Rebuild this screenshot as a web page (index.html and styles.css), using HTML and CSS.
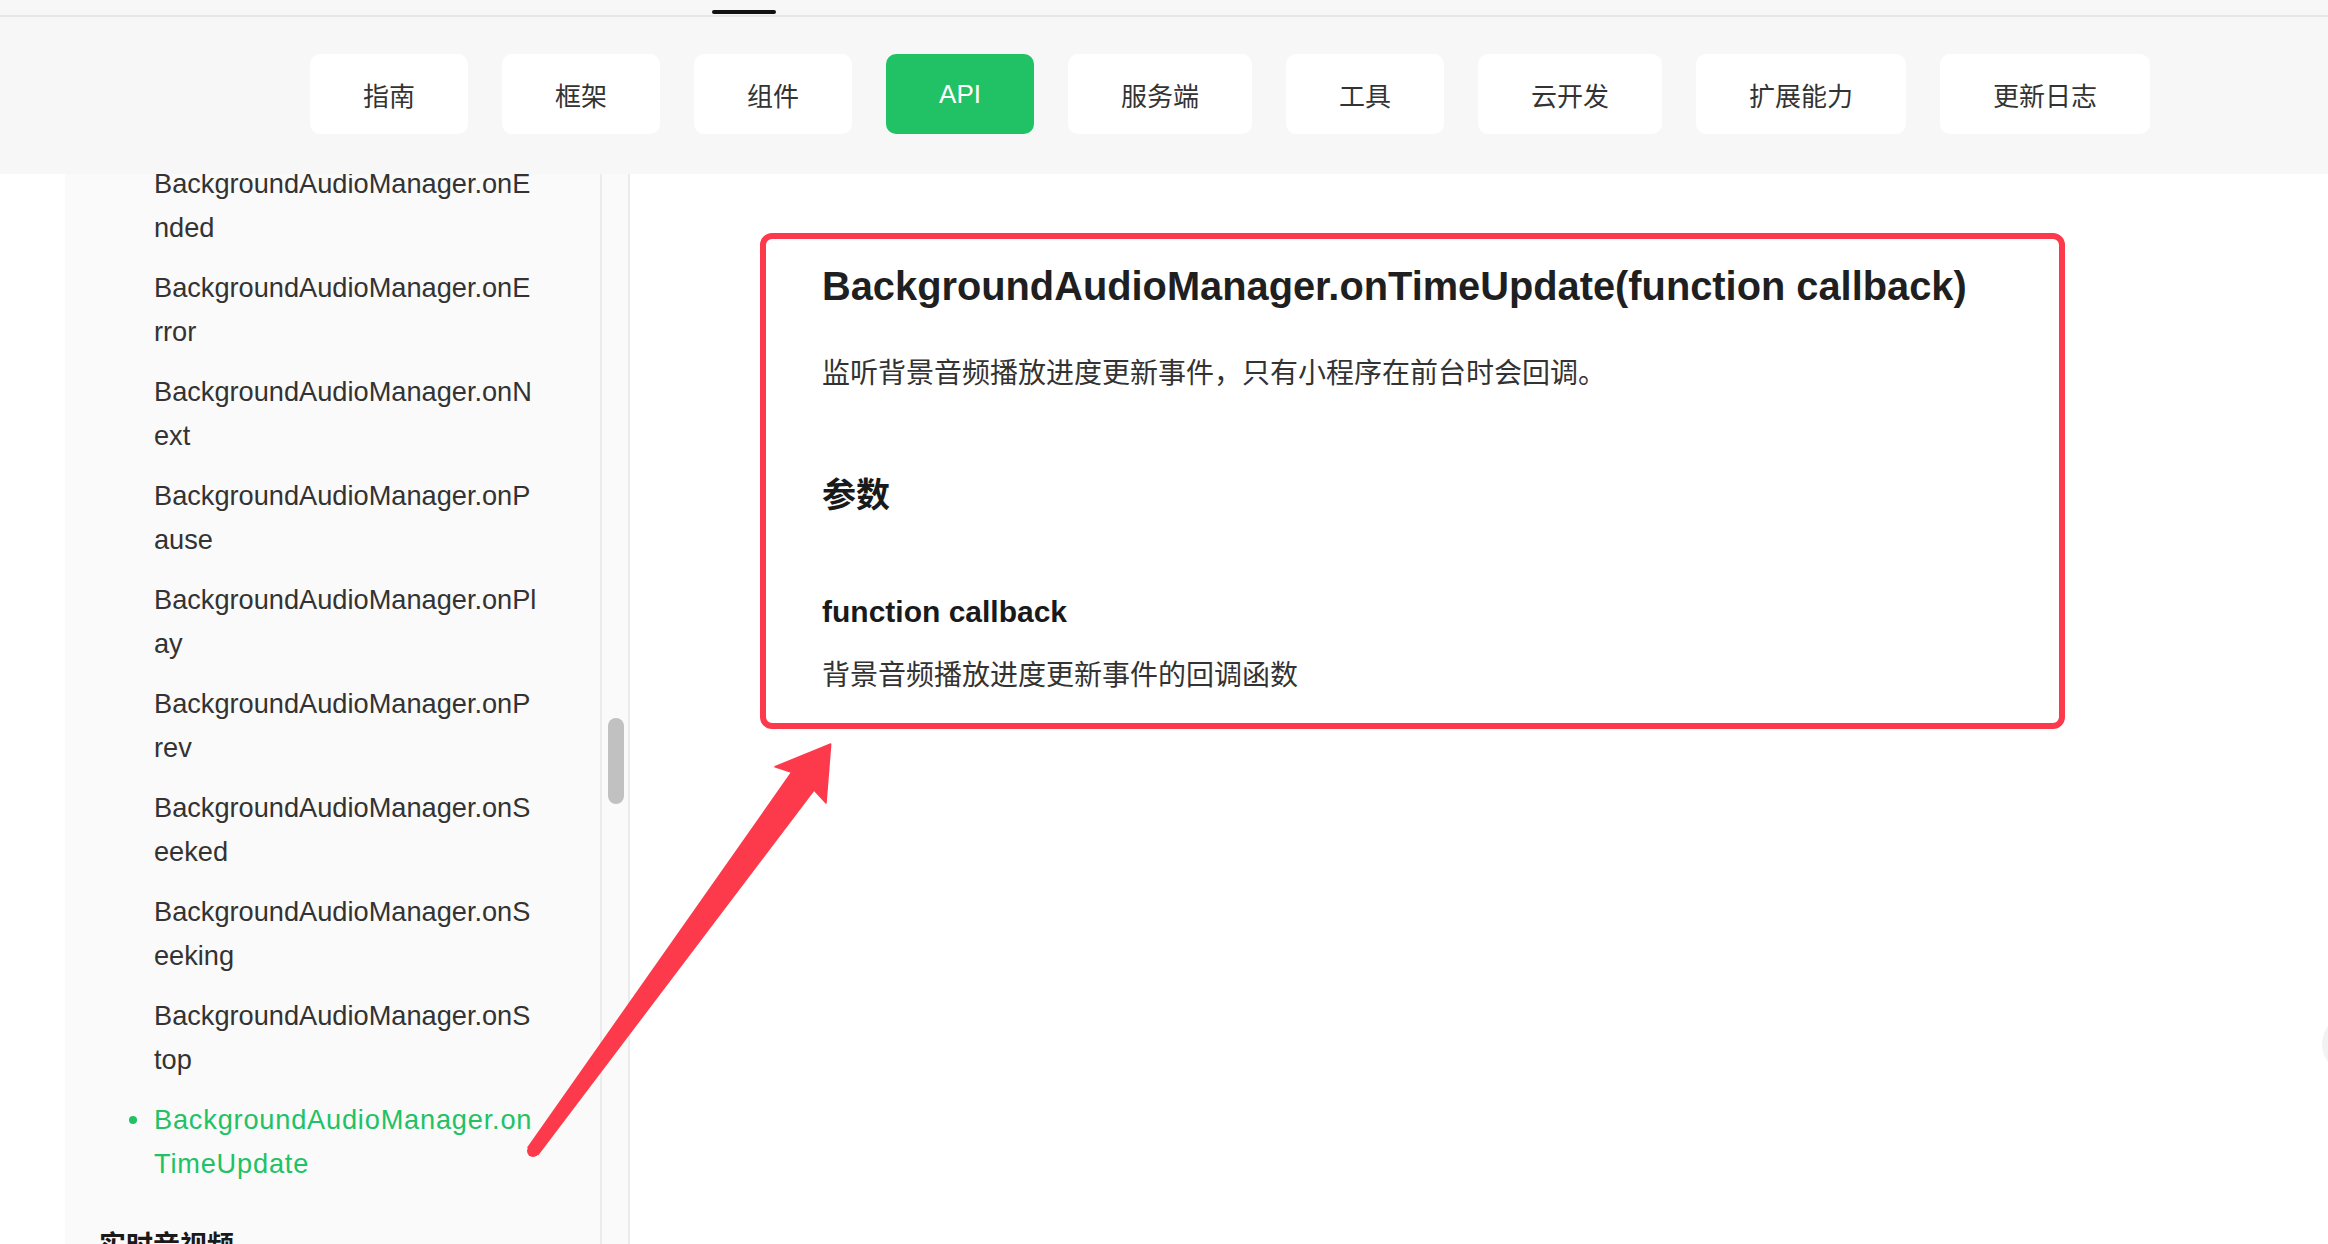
FILE: index.html
```html
<!DOCTYPE html>
<html lang="zh-CN">

<head>
    <meta charset="UTF-8">
    <meta name="viewport" content="width=device-width, initial-scale=1">
    <title>BackgroundAudioManager.onTimeUpdate</title>
    <link rel="stylesheet" href="styles.css">
</head>

<body>
    <header class="site-header">
        <div class="topbar"><span class="topbar-indicator"></span></div>
        <nav class="main-nav">
            <a class="nav-btn" href="#">指南</a>
            <a class="nav-btn" href="#">框架</a>
            <a class="nav-btn" href="#">组件</a>
            <a class="nav-btn active" href="#">API</a>
            <a class="nav-btn" href="#">服务端</a>
            <a class="nav-btn" href="#">工具</a>
            <a class="nav-btn" href="#">云开发</a>
            <a class="nav-btn" href="#">扩展能力</a>
            <a class="nav-btn" href="#">更新日志</a>
        </nav>
    </header>

    <div class="page">
        <aside class="sidebar">
            <ul class="side-list">
                <li>BackgroundAudioManager.onE<wbr>nded</li>
                <li>BackgroundAudioManager.onE<wbr>rror</li>
                <li>BackgroundAudioManager.onN<wbr>ext</li>
                <li>BackgroundAudioManager.onP<wbr>ause</li>
                <li>BackgroundAudioManager.onPl<wbr>ay</li>
                <li>BackgroundAudioManager.onP<wbr>rev</li>
                <li>BackgroundAudioManager.onS<wbr>eeked</li>
                <li>BackgroundAudioManager.onS<wbr>eeking</li>
                <li>BackgroundAudioManager.onS<wbr>top</li>
                <li class="active">BackgroundAudioManager.on<wbr>TimeUpdate</li>
            </ul>
            <h3 class="side-group">实时音视频</h3>
        </aside>
        <div class="side-scroll"><span class="side-thumb"></span></div>

        <main class="content">
            <section class="api-box">
                <h1 class="api-title">BackgroundAudioManager.onTimeUpdate(function callback)</h1>
                <p class="api-desc">监听背景音频播放进度更新事件，只有小程序在前台时会回调。</p>
                <h2 class="api-section">参数</h2>
                <h3 class="api-param">function callback</h3>
                <p class="api-param-desc">背景音频播放进度更新事件的回调函数</p>
            </section>
        </main>
    </div>

    <!-- annotation arrow drawn over the page -->
    <svg class="mark-arrow" viewBox="0 0 2328 1244" width="2328" height="1244">
        <polygon points="528,1147.5 791.7,772.3 775,766.7 830.7,744 826,803 814,790 538,1154.5"
            fill="#fd3a4b" stroke="#fd3a4b" stroke-width="1.5" stroke-linejoin="round" />
        <circle cx="533" cy="1151" r="6" fill="#fd3a4b" />
    </svg>

    <div class="float-btn"></div>
</body>

</html>
```

FILE: styles.css
```css
body,
h1,
h2,
h3,
p,
ul {
    margin: 0;
    padding: 0;
}

body {
    font-family: "Liberation Sans", "Noto Sans CJK SC", sans-serif;
    color: #333;
    background: #fff;
    width: 2328px;
    height: 1244px;
    overflow: hidden;
    position: relative;
}

/* header */
.site-header {
    position: relative;
    z-index: 2;
    background: #f7f7f7;
}

.topbar {
    height: 15px;
    border-bottom: 2px solid #e7e7e7;
    padding-left: 712px;
    display: flex;
    align-items: flex-end;
}

.topbar-indicator {
    width: 64px;
    height: 4px;
    margin-bottom: 1px;
    background: #111;
    border-radius: 2px;
}

.main-nav {
    display: flex;
    gap: 34px;
    padding: 37px 0 40px 310px;
}

.nav-btn {
    display: flex;
    align-items: center;
    height: 80px;
    padding: 0 53px;
    background: #fff;
    border-radius: 10px;
    color: #333;
    font-size: 26px;
    text-decoration: none;
}

.nav-btn.active {
    background: #21c265;
    color: #fff;
}

/* sidebar */
.page {
    display: flex;
    height: 1070px;
    overflow: hidden;
}

.sidebar {
    width: 537px;
    margin-left: 65px;
    padding-left: 89px;
    box-sizing: border-box;
    background: #fafafa;
    border-right: 2px solid #ebebeb;
    overflow: hidden;
}

.side-list {
    list-style: none;
    margin-top: -12px;
    width: 395px;
}

.side-list li {
    font-size: 27.2px;
    line-height: 44px;
    margin-bottom: 16px;
    color: #333;
    position: relative;
}

.side-list li.active {
    color: #21c265;
    letter-spacing: 0.8px;
}

.side-list li.active::before {
    content: "";
    position: absolute;
    left: -25px;
    top: 18px;
    width: 8px;
    height: 8px;
    border-radius: 50%;
    background: #21c265;
}

.side-group {
    margin-top: 38px;
    margin-left: -55px;
    font-size: 27px;
    line-height: 44px;
    font-weight: bold;
    color: #1a1a1a;
}

.side-scroll {
    width: 28px;
    box-sizing: border-box;
    background: #fafafa;
    border-right: 2px solid #ebebeb;
}

.side-thumb {
    display: block;
    width: 16px;
    height: 86px;
    margin: 544px 0 0 6px;
    background: #c1c1c1;
    border-radius: 8px;
}

/* content */
.content {
    flex: 1;
    padding: 59px 0 0 130px;
}

.api-box {
    width: 1305px;
    box-sizing: border-box;
    border: 6px solid #fd3a4b;
    border-radius: 12px;
    padding: 20px 56px 23px;
    color: #1a1a1a;
}

.api-title {
    font-size: 39.8px;
    line-height: 55px;
    font-weight: bold;
    color: #1f1f1f;
}

.api-desc,
.api-param-desc {
    font-size: 28px;
    line-height: 48px;
    color: #333;
}

.api-desc {
    margin-top: 36px;
}

.api-section {
    margin-top: 73px;
    font-size: 34px;
    line-height: 48px;
    font-weight: bold;
}

.api-param {
    margin-top: 72px;
    font-size: 30px;
    line-height: 42px;
    font-weight: bold;
}

.api-param-desc {
    margin-top: 19px;
}

/* overlays */
.mark-arrow {
    position: absolute;
    left: 0;
    top: 0;
    pointer-events: none;
    z-index: 3;
}

.float-btn {
    position: absolute;
    right: -52px;
    top: 1015px;
    width: 58px;
    height: 58px;
    border-radius: 50%;
    background: #f2f2f2;
}
```
